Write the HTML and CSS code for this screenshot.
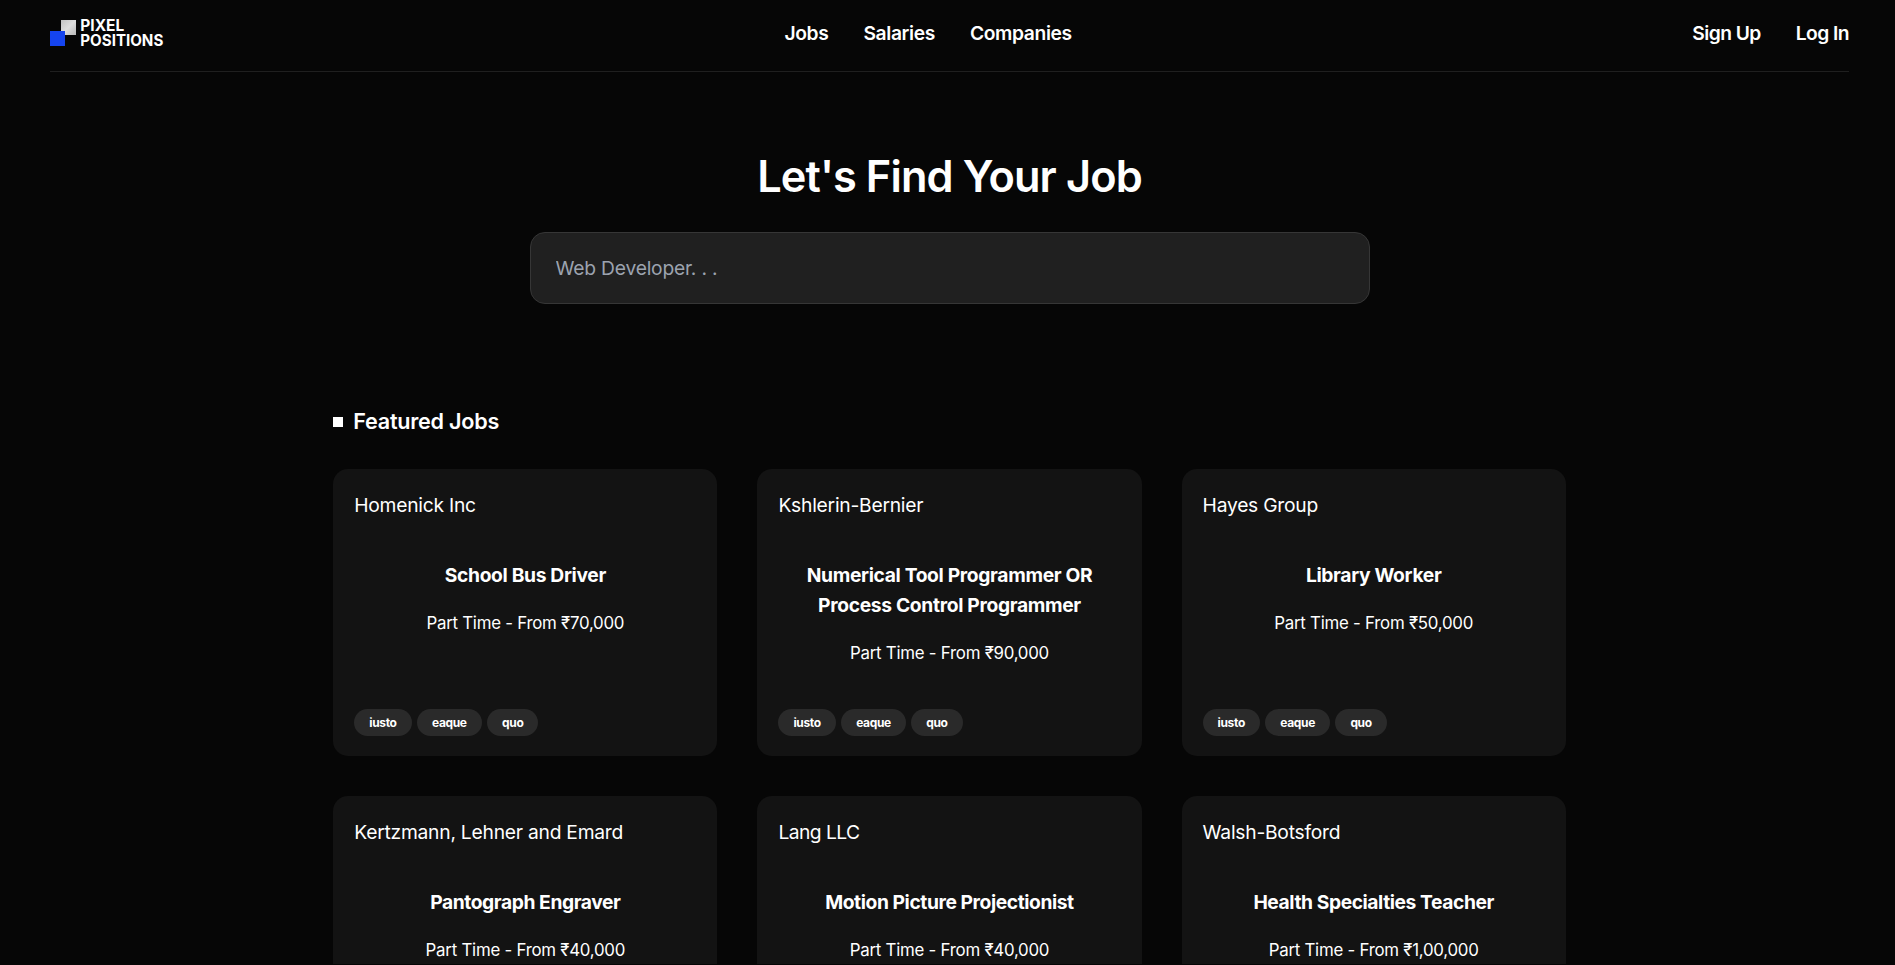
FILE: index.html
```html
<!DOCTYPE html>
<html lang="en">
<head>
<meta charset="utf-8">
<title>Pixel Positions</title>
<link rel="stylesheet" href="styles.css">
</head>
<body>
<div class="page">
  <nav class="nav">
    <a class="logo" href="#">
      <svg class="logo-mark" width="114" height="28" viewBox="0 0 114 28" role="img" aria-label="Pixel Positions">
        <defs><linearGradient id="tile" x1="0" y1="0" x2="1" y2="1"><stop offset="0" stop-color="#c2c2c2"/><stop offset="0.5" stop-color="#dedede"/><stop offset="1" stop-color="#b8b8b8"/></linearGradient></defs>
        <rect x="11" y="1" width="15" height="15" fill="url(#tile)"/>
        <rect x="0" y="12" width="15" height="15" fill="#1544ef"/>
        <text class="logo-text" x="30.3" y="12.3" textLength="44" lengthAdjust="spacingAndGlyphs">PIXEL</text>
        <text class="logo-text" x="30.3" y="26.8" textLength="83" lengthAdjust="spacingAndGlyphs">POSITIONS</text>
      </svg>
    </a>
    <div class="links"><a>Jobs</a><a>Salaries</a><a>Companies</a></div>
    <div class="links auth"><a>Sign Up</a><a>Log In</a></div>
  </nav>
  <main class="main">
    <section class="hero">
      <h1 class="title">Let's Find Your Job</h1>
      <form><input class="search" type="text" placeholder="Web Developer. . ."></form>
    </section>
    <section>
      <h2 class="heading"><span class="square"></span><span class="heading-text">Featured Jobs</span></h2>
      <div class="grid">
        <article class="card"><div class="company">Homenick Inc</div><div class="body"><h3 class="job">School Bus Driver</h3><p class="pay">Part Time - From ₹70,000</p></div><div class="tags"><a class="tag">iusto</a><a class="tag">eaque</a><a class="tag">quo</a></div></article>
        <article class="card"><div class="company">Kshlerin-Bernier</div><div class="body"><h3 class="job">Numerical Tool Programmer OR<br>Process Control Programmer</h3><p class="pay">Part Time - From ₹90,000</p></div><div class="tags"><a class="tag">iusto</a><a class="tag">eaque</a><a class="tag">quo</a></div></article>
        <article class="card"><div class="company">Hayes Group</div><div class="body"><h3 class="job">Library Worker</h3><p class="pay">Part Time - From ₹50,000</p></div><div class="tags"><a class="tag">iusto</a><a class="tag">eaque</a><a class="tag">quo</a></div></article>
        <article class="card"><div class="company">Kertzmann, Lehner and Emard</div><div class="body"><h3 class="job tight">Pantograph Engraver</h3><p class="pay">Part Time - From ₹40,000</p></div></article>
        <article class="card"><div class="company tight">Lang LLC</div><div class="body"><h3 class="job tight">Motion Picture Projectionist</h3><p class="pay">Part Time - From ₹40,000</p></div></article>
        <article class="card"><div class="company">Walsh-Botsford</div><div class="body"><h3 class="job tight">Health Specialties Teacher</h3><p class="pay">Part Time - From ₹1,00,000</p></div></article>
      </div>
    </section>
  </main>
</div>
</body>
</html>
```
FILE: styles.css
```css
* { box-sizing: border-box; margin: 0; padding: 0; }
html { background: #060606; overflow: hidden; }
body { height: 965px; overflow: hidden; background: #060606; color: #fff; font-family: Inter, sans-serif; font-size: 19.25px; line-height: 30px; }
/* The page is slightly wider than the window and clipped at its edges. */
.page { width: 1899px; height: 964px; padding: 0 50px; overflow: hidden; }
.nav { display: flex; justify-content: space-between; align-items: center; height: 72px; padding-bottom: 6px; border-bottom: 1px solid #1f1f1f; }
.logo { display: flex; }
.logo-mark { overflow: visible; }
.logo-text { font: 700 15.7px Inter, sans-serif; fill: #fff; }
.links { display: flex; gap: 35px; font-weight: 600; letter-spacing: -0.38px; }
.auth { letter-spacing: -0.56px; }
.main { width: 1232.5px; margin: 50px auto 0; }
.hero { display: flex; flex-direction: column; align-items: center; padding-top: 29px; }
.title { font-size: 43.3px; line-height: 50px; font-weight: 600; letter-spacing: -0.87px; }
.search { display: block; width: 840px; height: 72px; margin-top: 31px; padding: 0 25px; border: 1px solid #363636; border-radius: 15px; background: #202020; color: #fff; font: 19.25px Inter, sans-serif; letter-spacing: -0.21px; }
.search::placeholder { color: #9ca3af; }
.heading { display: flex; align-items: center; gap: 10px; margin-top: 103px; font-size: 21.6px; font-weight: 600; letter-spacing: -0.25px; }
.heading-text { padding-bottom: 2px; line-height: 28px; }
.square { width: 10px; height: 10px; background: #fff; }
.grid { display: grid; grid-template-columns: repeat(3, 1fr); gap: 40px; margin-top: 32px; }
.card { display: flex; flex-direction: column; height: 287px; padding: 21px 21px 20px; border-radius: 15px; background: #131313; }
.company { letter-spacing: -0.24px; }
.body { flex: 1; padding-top: 40px; text-align: center; }
.job { font-size: 19.25px; font-weight: 700; letter-spacing: -0.34px; }
.company.tight { letter-spacing: -0.55px; }
.job.tight { letter-spacing: -0.43px; }
.pay { margin-top: 18px; font-size: 16.85px; letter-spacing: -0.25px; }
.tags { display: flex; gap: 5.4px; }
.tag { padding: 0 15px; border-radius: 14px; background: #2a2a2a; font-size: 12px; line-height: 27px; font-weight: 700; letter-spacing: -0.35px; }
```
